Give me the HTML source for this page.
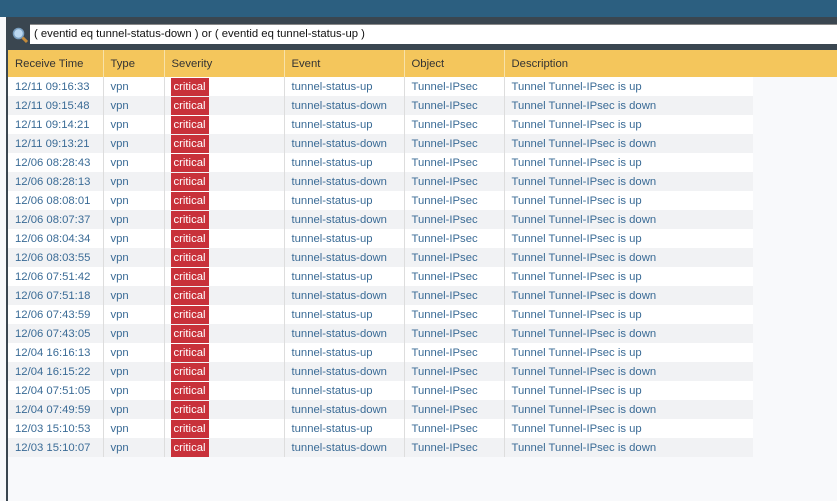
<!DOCTYPE html>
<html><head><style>
*{margin:0;padding:0;box-sizing:border-box}
body{width:837px;height:501px;overflow:hidden;background:#f8f9fb;font-family:"Liberation Sans",sans-serif;font-size:11.3px;position:relative}
.top{position:absolute;left:0;top:0;width:837px;height:17px;background:#2c5f80}
.left{position:absolute;left:0;top:17px;width:6px;height:484px;background:#f8f9fb}
.lb{position:absolute;left:6px;top:17px;width:2px;height:484px;background:#3a4650}
.bar{position:absolute;left:6px;top:17px;width:831px;height:33px;background:#3a4650}
.inp{position:absolute;left:30px;top:24px;width:807px;height:20px;background:#fff;border-top:1px solid #888;color:#111;font-size:11.3px;line-height:19px;padding-left:4px}
.ico{position:absolute;left:12px;top:27px}
table{position:absolute;left:8px;top:50px;border-collapse:collapse}
th{height:27px;background:#f4c65c;font-weight:normal;text-align:left;padding-left:7px;color:#333;border-left:1px solid #f8e2a8;font-size:11.3px}
th:first-child{border-left:none}
td{height:19px;padding-left:7px;color:#3a6b96;border-left:1px solid #ddd;white-space:nowrap}
td:first-child{border-left:none}
tr.a td{background:#fff}
tr.b td{background:#f1f2f4}
.c{display:inline-block;background:#c8313a;color:#fff;padding:0 3px;height:18px;line-height:18px;margin-left:-1px}
.hx{position:absolute;left:753px;top:50px;width:84px;height:27px;background:#f4c65c}
</style></head><body>
<div class="top"></div><div class="left"></div><div class="bar"></div><div class="lb"></div>
<svg class="ico" width="17" height="17" viewBox="0 0 17 17"><circle cx="6.5" cy="6.5" r="5" fill="#bcd8f0" stroke="#7a9fc0" stroke-width="1.5"/><line x1="10.5" y1="10.5" x2="15" y2="15" stroke="#c48a3a" stroke-width="3"/></svg>
<div class="inp">( eventid eq tunnel-status-down ) or ( eventid eq tunnel-status-up )</div>
<div class="hx"></div>
<table>
<colgroup><col style="width:95px"><col style="width:61px"><col style="width:120px"><col style="width:120px"><col style="width:100px"><col style="width:249px"></colgroup>
<tr><th>Receive Time</th><th>Type</th><th>Severity</th><th>Event</th><th>Object</th><th>Description</th></tr>
<tr class="a"><td>12/11 09:16:33</td><td>vpn</td><td><span class="c">critical</span></td><td>tunnel-status-up</td><td>Tunnel-IPsec</td><td>Tunnel Tunnel-IPsec is up</td></tr>
<tr class="b"><td>12/11 09:15:48</td><td>vpn</td><td><span class="c">critical</span></td><td>tunnel-status-down</td><td>Tunnel-IPsec</td><td>Tunnel Tunnel-IPsec is down</td></tr>
<tr class="a"><td>12/11 09:14:21</td><td>vpn</td><td><span class="c">critical</span></td><td>tunnel-status-up</td><td>Tunnel-IPsec</td><td>Tunnel Tunnel-IPsec is up</td></tr>
<tr class="b"><td>12/11 09:13:21</td><td>vpn</td><td><span class="c">critical</span></td><td>tunnel-status-down</td><td>Tunnel-IPsec</td><td>Tunnel Tunnel-IPsec is down</td></tr>
<tr class="a"><td>12/06 08:28:43</td><td>vpn</td><td><span class="c">critical</span></td><td>tunnel-status-up</td><td>Tunnel-IPsec</td><td>Tunnel Tunnel-IPsec is up</td></tr>
<tr class="b"><td>12/06 08:28:13</td><td>vpn</td><td><span class="c">critical</span></td><td>tunnel-status-down</td><td>Tunnel-IPsec</td><td>Tunnel Tunnel-IPsec is down</td></tr>
<tr class="a"><td>12/06 08:08:01</td><td>vpn</td><td><span class="c">critical</span></td><td>tunnel-status-up</td><td>Tunnel-IPsec</td><td>Tunnel Tunnel-IPsec is up</td></tr>
<tr class="b"><td>12/06 08:07:37</td><td>vpn</td><td><span class="c">critical</span></td><td>tunnel-status-down</td><td>Tunnel-IPsec</td><td>Tunnel Tunnel-IPsec is down</td></tr>
<tr class="a"><td>12/06 08:04:34</td><td>vpn</td><td><span class="c">critical</span></td><td>tunnel-status-up</td><td>Tunnel-IPsec</td><td>Tunnel Tunnel-IPsec is up</td></tr>
<tr class="b"><td>12/06 08:03:55</td><td>vpn</td><td><span class="c">critical</span></td><td>tunnel-status-down</td><td>Tunnel-IPsec</td><td>Tunnel Tunnel-IPsec is down</td></tr>
<tr class="a"><td>12/06 07:51:42</td><td>vpn</td><td><span class="c">critical</span></td><td>tunnel-status-up</td><td>Tunnel-IPsec</td><td>Tunnel Tunnel-IPsec is up</td></tr>
<tr class="b"><td>12/06 07:51:18</td><td>vpn</td><td><span class="c">critical</span></td><td>tunnel-status-down</td><td>Tunnel-IPsec</td><td>Tunnel Tunnel-IPsec is down</td></tr>
<tr class="a"><td>12/06 07:43:59</td><td>vpn</td><td><span class="c">critical</span></td><td>tunnel-status-up</td><td>Tunnel-IPsec</td><td>Tunnel Tunnel-IPsec is up</td></tr>
<tr class="b"><td>12/06 07:43:05</td><td>vpn</td><td><span class="c">critical</span></td><td>tunnel-status-down</td><td>Tunnel-IPsec</td><td>Tunnel Tunnel-IPsec is down</td></tr>
<tr class="a"><td>12/04 16:16:13</td><td>vpn</td><td><span class="c">critical</span></td><td>tunnel-status-up</td><td>Tunnel-IPsec</td><td>Tunnel Tunnel-IPsec is up</td></tr>
<tr class="b"><td>12/04 16:15:22</td><td>vpn</td><td><span class="c">critical</span></td><td>tunnel-status-down</td><td>Tunnel-IPsec</td><td>Tunnel Tunnel-IPsec is down</td></tr>
<tr class="a"><td>12/04 07:51:05</td><td>vpn</td><td><span class="c">critical</span></td><td>tunnel-status-up</td><td>Tunnel-IPsec</td><td>Tunnel Tunnel-IPsec is up</td></tr>
<tr class="b"><td>12/04 07:49:59</td><td>vpn</td><td><span class="c">critical</span></td><td>tunnel-status-down</td><td>Tunnel-IPsec</td><td>Tunnel Tunnel-IPsec is down</td></tr>
<tr class="a"><td>12/03 15:10:53</td><td>vpn</td><td><span class="c">critical</span></td><td>tunnel-status-up</td><td>Tunnel-IPsec</td><td>Tunnel Tunnel-IPsec is up</td></tr>
<tr class="b"><td>12/03 15:10:07</td><td>vpn</td><td><span class="c">critical</span></td><td>tunnel-status-down</td><td>Tunnel-IPsec</td><td>Tunnel Tunnel-IPsec is down</td></tr>
</table>
</body></html>
